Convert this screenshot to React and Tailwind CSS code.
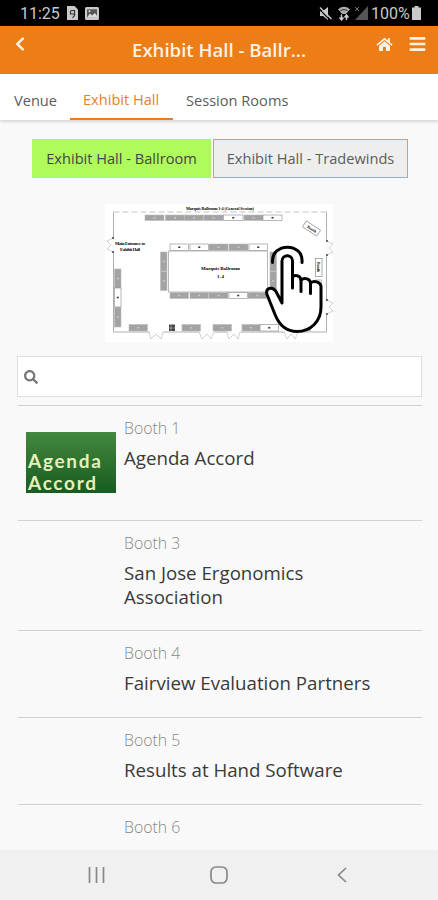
import React, { useState } from 'react';
import { FaBars, FaChevronLeft, FaSearch } from 'react-icons/fa';

const TABS = [
  { id: 'venue', label: 'Venue', className: 'w-[70px] pl-[14px]' },
  { id: 'hall', label: 'Exhibit Hall', className: 'w-[103px] pl-[13px]' },
  { id: 'rooms', label: 'Session Rooms', className: 'w-[130px] pl-[13px]' },
];

const BOOTHS = [
  { id: 1, name: 'Agenda Accord', logo: true, height: 'h-[115px]' },
  { id: 3, name: 'San Jose Ergonomics Association', height: 'h-[110px]' },
  { id: 4, name: 'Fairview Evaluation Partners', height: 'h-[87px]' },
  { id: 5, name: 'Results at Hand Software', height: 'h-[87px]' },
  { id: 6, name: '', height: 'h-[46px]' },
];

// [x, y, width, height, filled]
const MAP_BOOTHS = [
  [145, 215, 19, 5.5, true],
  [165.5, 215, 19, 5.5, true],
  [184.5, 215, 19, 5.5, true],
  [204, 215, 19, 5.5, true],
  [223.5, 215, 19.5, 5.5, false],
  [244, 215, 19, 5.5, true],
  [263, 215, 19, 5.5, false],
  [170, 244, 18.5, 6.5, false],
  [190, 244, 18.5, 6.5, false],
  [209, 244, 19, 6.5, true],
  [229, 244, 19, 6.5, true],
  [249, 244, 18.5, 6.5, false],
  [170, 292.5, 18.5, 6, true],
  [190, 292.5, 18.5, 6, true],
  [209, 292.5, 19, 6, true],
  [229, 292.5, 18.5, 6, false],
  [248, 292.5, 18.5, 6, true],
  [160.5, 252, 6.5, 19, true],
  [160.5, 271.5, 6.5, 19, true],
  [270, 252, 6.5, 19, true],
  [270, 271.5, 6.5, 19, true],
  [114.5, 269, 6.5, 19, true],
  [114.5, 288, 6.5, 19, false],
  [114.5, 307, 6.5, 20, true],
  [129, 324.5, 18.5, 6.5, true],
  [182, 324.5, 18.5, 6.5, true],
  [213, 324.5, 18.5, 6.5, true],
  [242, 324.5, 18, 6.5, true],
  [260, 324.5, 18.5, 6.5, false],
  [292, 324.5, 18.5, 6.5, true],
  [315.5, 280, 6, 17, false],
];

const StatusBar = () => (
  <div className="flex h-[26px] flex-shrink-0 items-center bg-black pl-5 pr-[17px] font-['Roboto'] text-[16px] text-[#c9c9c9]">
    <span className="w-[47px] pt-px leading-[26px]">11:25</span>
    <svg className="h-[14px] w-[11px]" viewBox="0 0 11 14">
      <path d="M0 0h7.5L11 3.5V14H0z" fill="#c9c9c9" />
      <path d="M3.5 4.5h4v5l-2 2.5M3.5 5v3h4" fill="none" stroke="#333" strokeWidth="1.2" />
    </svg>
    <svg className="ml-[7px] h-[13px] w-[14px]" viewBox="0 0 14 13">
      <rect width="14" height="13" rx="1.5" fill="#c9c9c9" />
      <path d="M2 2.3h10v8H2z" fill="#555" />
      <path d="M2 10.5 5 6.5l2 2 3-2.5 2 3v1.5z" fill="#ddd" />
      <circle cx="4.5" cy="4.2" r="1" fill="#ddd" />
    </svg>
    <div className="flex-1" />
    <svg className="h-[15px] w-[13px]" viewBox="0 0 13 15">
      <path d="M1 5h3l5-4v13L4 10H1z" fill="#c9c9c9" />
      <path d="M0 2.8 11 14" stroke="#000" strokeWidth="1.2" />
      <path d="M1 1.5 12.5 13" stroke="#c9c9c9" strokeWidth="1.5" />
    </svg>
    <svg className="ml-[6px] h-[15px] w-[12px]" viewBox="0 0 12 15">
      <path d="M0 3.2Q6-1.5 12 3.2L7 9H5z" fill="#aaa" />
      <path d="M2.500 4.500Q6 2.500 9.500 4.500" fill="none" stroke="#333" />
      <path d="M1 8h10v7H1z" fill="#000" />
      <path d="M3.500 8.500v5m-2-2 2 2.500 2-2.500M8.500 14V9m-2 2.500 2-2.500 2 2.500" fill="none" stroke="#c9c9c9" strokeWidth="1.500" />
    </svg>
    <svg className="ml-1 h-[14px] w-[14px]" viewBox="0 0 14 14">
      <path d="M14 0v14H1z" fill="#555" />
      <path d="m1 1 4 4M5 1 1 5" stroke="#777" />
    </svg>
    <span className="ml-[3px] w-[41px] pt-px text-[16px] leading-[26px]">100%</span>
    <svg className="h-[14px] w-[9px]" viewBox="0 0 9 14">
      <path d="M2.500 0h4v1.500H9V14H0V1.500h2.500z" fill="#c9c9c9" />
    </svg>
  </div>
);

const HomeIcon = ({ className }) => (
  <svg className={className} viewBox="0 0 17 15" fill="currentColor">
    <path d="M8.500 4.200 14 8.800V14H10V10H7v4H3V8.800z" />
    <path d="M8.500.8 11.800 3.500V1.200H14V5.400L16.600 7.600 15.600 8.800 8.500 2.900 1.400 8.800.4 7.600z" />
  </svg>
);

const FloorPlan = () => (
  <svg className="h-[138px] w-[228px] bg-white" viewBox="105 204 228 138" fontFamily="Liberation Serif" fontWeight="bold">
    <path d="M113.500 212h213.500" stroke="#aaa" strokeWidth=".7" strokeDasharray="6 3" />
    <path
      d="M113.500 212v27m0 13v80h36m14 0h36m15 0h13m13 0h44m14 0h28V315m0-15v-45m0-14v-29"
      fill="none"
      stroke="#999"
      strokeWidth=".8"
    />
    <path
      d="M149 332l2 7 5-5 5 5 2-7M199 332l3 7 5-5 4 5 3-7M227 332l2 7 5-5 4 5 2-7M284 332l3 7 4-5 4 5 3-7M327 241l6 3-4 4 4 4-6 3M327 300l6 3-4 4 4 4-6 3M113 238l-6 3 4 4-4 4 6 3"
      fill="none"
      stroke="#bbb"
      strokeWidth=".7"
    />
    <g fill="#333">
      {[[113, 238], [113, 252], [327, 241], [327, 255], [327, 300], [327, 314]].map(([x, y]) => (
        <circle key={`${x}-${y}`} cx={x} cy={y} r=".9" />
      ))}
    </g>
    <path d="M168.500 251h99v41h-99z" fill="#fff" stroke="#999" strokeWidth=".7" />
    {MAP_BOOTHS.map(([x, y, w, h, filled]) => (
      <g key={`${x}-${y}`}>
        <rect x={x} y={y} width={w} height={h} fill={filled ? '#a3a3a3' : '#fff'} stroke={filled ? '#bbb' : '#888'} strokeWidth=".6" />
        <rect x={x + w / 2 - 1} y={y + h / 2 - 0.8} width="2" height="1.6" fill={filled ? '#c8c8c8' : '#333'} />
      </g>
    ))}
    <path d="M169 324.500h6v6.500h-6z" fill="#444" />
    <path d="M171 324.500v6.500m-2-3h6" stroke="#aaa" strokeWidth=".7" />
    <g transform="rotate(33 311.500 228.500)">
      <rect x="303" y="225" width="17" height="7" fill="#fff" stroke="#888" strokeWidth=".7" />
      <text x="307" y="230.200" fontSize="4">Booth</text>
    </g>
    <g transform="rotate(90 319 267)">
      <rect x="310.500" y="264" width="18" height="6.500" fill="#fff" stroke="#888" strokeWidth=".7" />
      <text x="314" y="268.700" fontSize="4">Booth</text>
    </g>
    <text x="186" y="210" fontSize="4.200" textLength="68">Marquis Ballroom 1-4 (General Session)</text>
    <text x="115" y="244.800" fontSize="4.500" textLength="30">Main Entrance to</text>
    <text x="120" y="250.500" fontSize="4.500" textLength="20">Exhibit Hall</text>
    <text x="201" y="270" fontSize="5" textLength="39">Marquis Ballroom</text>
    <text x="217" y="278" fontSize="5" textLength="7">1-4</text>
    <g stroke="#000" strokeWidth="3" strokeLinecap="round" strokeLinejoin="round">
      <path
        d="M282 303V261a5.250 5.250 0 0 1 10.500 0V277c3-3 8-1 8.500 3 4-3 9-1 9.500 3 4-3 9.500-1 10.500 3V307c0 14-10 24.500-24 24.500-12 0-18-7-22-17l-8-20c-2-6 5-9 9-3z"
        fill="#fff"
      />
      <path d="M292.500 276v12M301 279.500v12M310.500 282.500v11M272.500 262.500C271 242 304 242 302 262.500" fill="none" />
    </g>
  </svg>
);

const AgendaLogo = () => (
  <div className="flex h-[61px] w-[90px] items-end bg-linear-to-b from-[#43883f] to-[#175c20] pl-[2px] font-['Lato'] text-[19px] font-bold leading-[22px] tracking-[1.7px] text-[#e5f0bd]">
    <div className="-mb-px">
      Agenda
      <br />
      Accord
    </div>
  </div>
);

const BoothRow = ({ booth }) => (
  <li className={`flex border-t border-[#d2d2d2] ${booth.height}`}>
    <div className="w-[106px] flex-shrink-0 pl-2 pt-[26px]">{booth.logo && <AgendaLogo />}</div>
    <div className="w-[270px] pt-3">
      <div className="text-[15.800px] font-light leading-[21px] text-[#888]">Booth {booth.id}</div>
      <div className="mt-[7px] text-[18.700px] leading-6 text-[#3a3a3a]">{booth.name}</div>
    </div>
  </li>
);

const App = () => {
  const [tab, setTab] = useState('hall');
  const [query, setQuery] = useState('');

  return (
    <div className="flex h-[900px] w-[438px] flex-col overflow-hidden bg-[#f9f9f9] font-['Open_Sans',sans-serif]">
      <StatusBar />

      <header className="flex h-12 flex-shrink-0 bg-[#ed7d17] text-[#fff1e4]">
        <FaChevronLeft className="ml-[13px] mt-[10px] h-[16px] w-[14px]" />
        <h1 className="ml-[105px] w-[177px] whitespace-nowrap text-[18.600px] font-semibold leading-[48px]">
          Exhibit Hall - Ballr...
        </h1>
        <HomeIcon className="ml-[67px] mt-[11px] h-[15px] w-[17px]" />
        <FaBars className="ml-[16px] mt-[9px] h-[18px] w-[17px]" />
      </header>

      <nav className="flex h-[47px] flex-shrink-0 border-b border-[#dedede] bg-white text-[14.600px] shadow-sm">
        {TABS.map((t) => (
          <button
            key={t.id}
            type="button"
            onClick={() => setTab(t.id)}
            className={`whitespace-nowrap text-left ${t.className} ${
              tab === t.id ? 'border-b-2 border-[#e98028] pt-2 text-[#e98028]' : 'pt-[7px] text-[#5c5c5c]'
            }`}
          >
            {t.label}
          </button>
        ))}
      </nav>

      <main className="flex min-h-0 flex-1 flex-col overflow-hidden pl-[18px] pr-4">
        <div className="ml-[14px] mt-[18px] flex h-[39px] flex-shrink-0 whitespace-nowrap text-[14.600px]">
          <button type="button" className="w-[179px] bg-[#b0fb5c] text-[#444]">
            Exhibit Hall - Ballroom
          </button>
          <button type="button" className="ml-[2px] w-[195px] border border-solid border-[#e39a5f] bg-[#eeeeee] text-[#5c5c5c]">
            Exhibit Hall - Tradewinds
          </button>
        </div>

        <div className="ml-[87px] mt-[26px] flex-shrink-0">
          <FloorPlan />
        </div>

        <label className="-ml-px mt-[14px] flex h-[41px] flex-shrink-0 items-center border border-[#dedede] bg-white pl-[6px]">
          <FaSearch className="h-[14px] w-[14px] text-[#777]" />
          <input
            className="ml-2 flex-1 outline-none"
            value={query}
            onChange={(e) => setQuery(e.target.value)}
          />
        </label>

        <ul className="mt-2">
          {BOOTHS.map((booth) => (
            <BoothRow key={booth.id} booth={booth} />
          ))}
        </ul>
      </main>

      <footer className="flex h-[50px] flex-shrink-0 items-center bg-[#f0f0f0]">
        <svg className="ml-[88px] h-4 w-[17px]" viewBox="0 0 17 16" fill="none" stroke="#888" strokeWidth="1.700">
          <path d="M1.500 0v16M8.500 0v16M15.500 0v16" />
        </svg>
        <svg className="ml-[105px] h-[18px] w-[18px]" viewBox="0 0 18 18" fill="none" stroke="#888" strokeWidth="1.700">
          <rect x="1" y="1" width="16" height="16" rx="5" />
        </svg>
        <svg className="ml-[109px] h-4 w-[10px]" viewBox="0 0 10 16" fill="none" stroke="#888" strokeWidth="1.700">
          <path d="M9 1 1.500 8 9 15" />
        </svg>
      </footer>
    </div>
  );
};

export default App;
